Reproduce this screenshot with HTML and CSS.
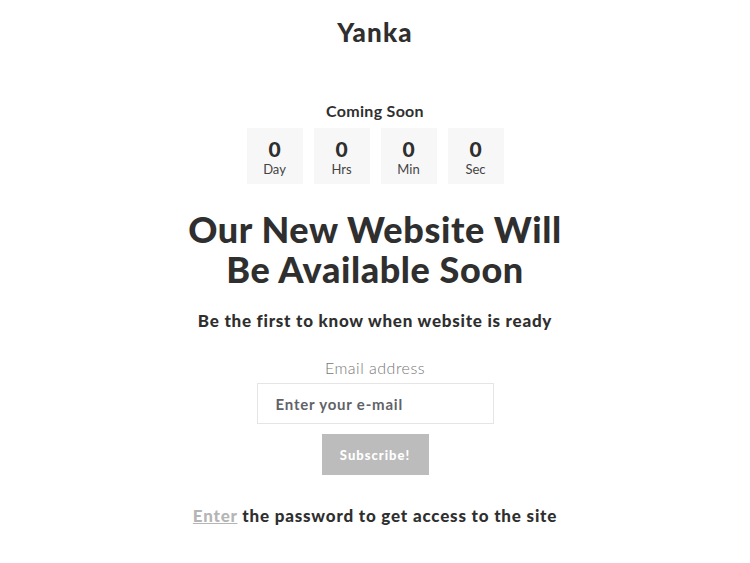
FILE: index.html
```html
<!DOCTYPE html>
<html lang="en">
<head>
  <meta charset="UTF-8" />
  <meta name="viewport" content="width=device-width, initial-scale=1.0"/>
  <title>Yanka - Coming Soon</title>
  <link rel="stylesheet" href="styles.css">
</head>
<body>

  <header>
    <h1 class="logo">Yanka</h1>
  </header>

  <main class="container">

    <section class="countdown">
      <h2>Coming Soon</h2>
      <div class="timer">
        <div class="unit"><span class="num">0</span><span class="label">Day</span></div>
        <div class="unit"><span class="num">0</span><span class="label">Hrs</span></div>
        <div class="unit"><span class="num">0</span><span class="label">Min</span></div>
        <div class="unit"><span class="num">0</span><span class="label">Sec</span></div>
      </div>
    </section>

    <h3 class="headline">Our New Website Will<br/>Be Available Soon</h3>
    <p class="sub">Be the first to know when website is ready</p>

    <form class="signup">
      <label for="email">Email address</label>
      <input type="email" id="email" placeholder="Enter your e-mail" />
      <button type="button">Subscribe!</button>
    </form>

    <p class="password"><a href="#">Enter</a> the password to get access to the site</p>

  </main>

</body>
</html>
```

FILE: styles.css
```css
body {
  font-family: 'Lato', sans-serif;
  margin: 0;
  padding: 0;
  background: #fff;
  color: #2f2f2f;
  text-align: center;
}

header {
  padding-top: 17px;
}

.logo {
  margin: 0;
  font-size: 26px;
  line-height: 30px;
  font-weight: 900;
  letter-spacing: 1.2px;
}

.container {
  padding-top: 54px;
}

.countdown h2 {
  margin: 0;
  font-size: 16px;
  line-height: 20px;
  font-weight: 700;
  letter-spacing: 0.3px;
}

.timer {
  display: flex;
  justify-content: center;
  gap: 11px;
  margin-top: 7px;
}

.unit {
  box-sizing: border-box;
  width: 56px;
  height: 56px;
  padding-top: 4px;
  background: #f7f7f7;
  display: flex;
  flex-direction: column;
  align-items: center;
  justify-content: center;
}

.num {
  font-size: 21px;
  line-height: 22px;
  font-weight: 900;
}

.label {
  font-size: 13px;
  line-height: 18px;
  color: #444;
}

.headline {
  margin: 25px 0 0;
  font-size: 36px;
  line-height: 40px;
  font-weight: 900;
  letter-spacing: 0.6px;
}

.sub {
  margin: 21px 0 0;
  font-size: 17px;
  line-height: 22px;
  font-weight: 900;
  letter-spacing: 0.75px;
}

.signup {
  display: flex;
  flex-direction: column;
  align-items: center;
  margin-top: 26px;
}

.signup label {
  font-size: 16px;
  line-height: 20px;
  font-weight: 300;
  color: #777;
  letter-spacing: 0.5px;
}

.signup input {
  box-sizing: border-box;
  width: 237px;
  height: 41px;
  margin-top: 5px;
  padding: 0 18px;
  border: 1px solid #e5e5e5;
  font-family: inherit;
  font-size: 15px;
  font-weight: 700;
  letter-spacing: 0.8px;
  outline: none;
}

.signup input::placeholder {
  color: #5f6368;
}

.signup button {
  width: 107px;
  height: 41px;
  margin-top: 10px;
  background: #bcbcbc;
  color: white;
  border: none;
  font-family: inherit;
  font-size: 13px;
  font-weight: 900;
  letter-spacing: 1px;
  cursor: pointer;
}

.password {
  margin: 30px 0 0;
  font-size: 17px;
  line-height: 22px;
  font-weight: 900;
  letter-spacing: 0.8px;
}

.password a {
  color: #b5b5b5;
  text-decoration: underline;
}
```
